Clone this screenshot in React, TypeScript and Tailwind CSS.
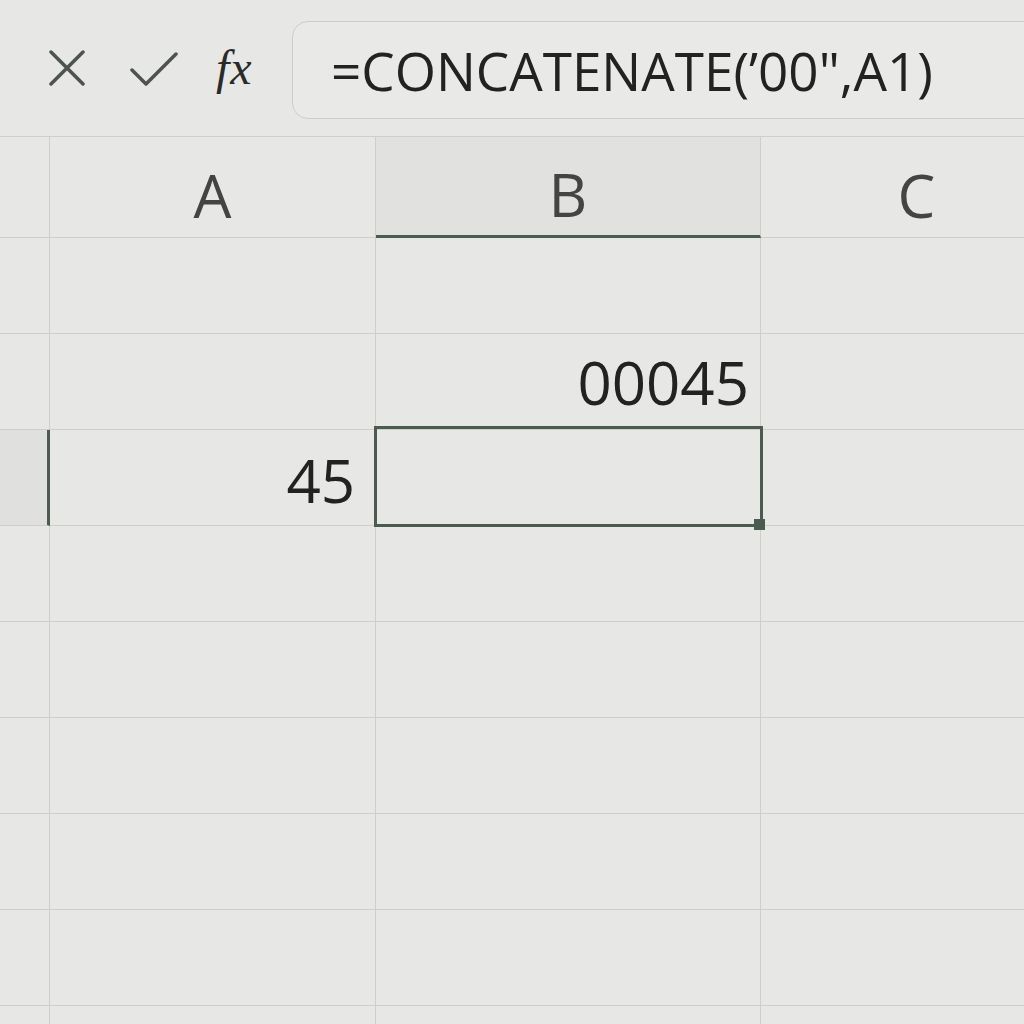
import React from 'react'

const ROWS = [1, 2, 3, 4, 5, 6, 7, 8, 9]

const cellFont = { fontFamily: '"Open Sans", "Noto Sans", sans-serif' }

export default function App() {
  return (
    <div className="w-[1024px] h-[1024px] overflow-hidden bg-[#e7e7e5] text-[#222]" style={cellFont}>
      {/* formula bar */}
      <div className="h-[137px] flex items-center border-b border-[#cfcfca]">
        <div className="flex items-center w-[292px] h-full">
          <svg width="36" height="36" viewBox="0 0 36 36" className="ml-[49px]">
            <path d="M2 2L34 34M34 2L2 34" stroke="#4d544f" strokeWidth="3.5" strokeLinecap="round" />
          </svg>
          <svg width="50" height="36" viewBox="0 0 50 36" className="ml-[45px] mt-[3px]">
            <path d="M2 18L16 32L46 2" stroke="#4d544f" strokeWidth="3.5" fill="none" strokeLinecap="round" strokeLinejoin="round" />
          </svg>
          <span
            className="ml-[36px] text-[48px] italic leading-none text-[#2a2a2a] tracking-[1px]"
            style={{ fontFamily: '"Liberation Serif", "DejaVu Serif", serif' }}
          >
            fx
          </span>
        </div>
        <div className="flex-1 h-[98px] mt-[4px] -mr-4 rounded-2xl border border-[#cdcdc8] bg-[#e9e9e7] flex items-center pl-[38px]">
          <span className="text-[53px] leading-none text-[#222]">=CONCATENATE(’00",A1)</span>
        </div>
      </div>

      {/* grid */}
      <div className="w-[1072px] grid grid-cols-[50px_326px_385px_1fr] grid-rows-[101px_repeat(9,96px)]">
        <div className="border-r border-b border-[#cfcfca]" />
        <div className="border-r border-b border-[#cfcfca] flex items-center justify-center pt-[16px] text-[60px] text-[#444]">A</div>
        <div className="border-r border-b-[3px] border-r-[#cfcfca] border-b-[#4b5b4f] bg-[#e1e1df] flex items-center justify-center pt-[16px] text-[60px] text-[#444]">
          B
        </div>
        <div className="border-b border-[#cfcfca] flex items-center justify-center pt-[16px] text-[60px] text-[#444]">C</div>

        {ROWS.map((r) => (
          <React.Fragment key={r}>
            <div
              className={
                r === 3
                  ? 'border-b border-b-[#cfcfca] border-r-[3px] border-r-[#4b5b4f] bg-[#e0e0de]'
                  : 'border-r border-b border-[#cfcfca]'
              }
            />
            <div className="border-r border-b border-[#cfcfca] flex items-center justify-end pr-[20px] pt-[4px] text-[60px] leading-none">
              {r === 3 ? '45' : ''}
            </div>
            <div className="relative border-r border-b border-[#cfcfca] flex items-center justify-end pr-[11px] text-[60px] leading-none">
              {r === 2 ? '00045' : ''}
              {r === 3 && (
                <>
                  <div className="absolute z-10 -left-[2px] -top-[4px] -right-[3px] -bottom-[2px] border-[3px] border-[#4b5b4f]" />
                  <div className="absolute z-10 -right-[5px] -bottom-[5px] w-[11px] h-[11px] bg-[#4b5b4f]" />
                </>
              )}
            </div>
            <div className="border-b border-[#cfcfca]" />
          </React.Fragment>
        ))}
      </div>
    </div>
  )
}
